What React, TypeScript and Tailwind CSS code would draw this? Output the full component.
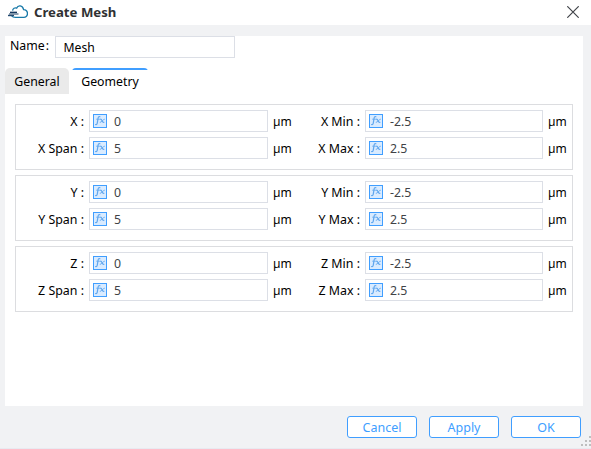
import React from "react";

const FxIcon = () => (
  <svg width="14" height="14" viewBox="0 0 14 14" className="shrink-0">
    <rect x="0.5" y="0.5" width="13" height="13" fill="#d9ebff" stroke="#409eff" />
    <g fill="none" stroke="#5fa6ee" strokeLinecap="round">
      <path d="M6.9 2.7C5.5 2.2 5.2 3.4 5 4.6L4.3 8.9c-.2 1.4-.8 2-1.7 1.6" strokeWidth="1.2" />
      <path d="M3.6 5.2h3" strokeWidth="0.8" />
      <path d="M7.5 5.2c1.6-.5 1.5 3.8 3.4 3.1" strokeWidth="1.2" />
      <path d="M11.4 5.1C9.9 4.9 8.9 8.7 7.2 8.4" strokeWidth="0.9" />
    </g>
  </svg>
);

const Field = ({ value, width }: { value: string; width: string }) => (
  <div className={`flex h-[22px] shrink-0 items-center border border-[#dcdfe6] bg-white pl-[3px] ${width}`}>
    <FxIcon />
    <span className="ml-[7px] pt-px text-[12.3px] leading-5 text-[#404246]">{value}</span>
  </div>
);

const Row = ({ labels, values }: { labels: [string, string]; values: [string, string] }) => (
  <div className="flex h-[22px] items-center whitespace-nowrap">
    <span className="w-[68px] pt-px text-right text-[12.4px]">{labels[0]} :</span>
    <div className="ml-[5px]">
      <Field value={values[0]} width="w-[179px]" />
    </div>
    <span className="ml-[5px] w-5 pt-px">µm</span>
    <span className="w-[67px] pt-px text-right text-[12.4px]">{labels[1]} :</span>
    <div className="ml-[5px]">
      <Field value={values[1]} width="w-[178px]" />
    </div>
    <span className="ml-[5px] pt-px">µm</span>
  </div>
);

const Group = ({ axis }: { axis: string }) => (
  <div className="flex h-[66px] flex-col gap-[5px] border border-[#dcdde0] pt-[5px]">
    <Row labels={[axis, `${axis} Min`]} values={["0", "-2.5"]} />
    <Row labels={[`${axis} Span`, `${axis} Max`]} values={["5", "2.5"]} />
  </div>
);

const DialogButton = ({ children }: { children: React.ReactNode }) => (
  <button className="flex h-[22px] w-[70px] items-center justify-center rounded-[3px] border border-[#409eff] bg-white pt-[2px] text-[12.5px] leading-5 text-[#409eff]">
    {children}
  </button>
);

export default function App() {
  return (
    <div className="relative flex h-[449px] w-[591px] flex-col overflow-hidden bg-[#f1f2f4] font-['Noto_Sans','Open_Sans',sans-serif] text-[12px] leading-5 text-black">
      <header className="flex h-[25px] shrink-0 items-center bg-white pl-2">
        <svg width="20" height="14" viewBox="0 0 20 14" className="mb-[2px] shrink-0" fill="none">
          <path
            d="M4.6 5.6C4.8 3.4 6.8 2.5 8.7 3.1 10-.1 14.6.1 15.6 4.6 20.7 4.9 20.7 12 15.8 12.4H7.5C5.6 12.4 4.3 11.7 3.5 10.6"
            stroke="#1879a8"
            strokeWidth="1.3"
          />
          <path d="M2 7.4h7" stroke="#17395f" strokeWidth="1.5" />
          <path d="M1 9h9.5" stroke="#7d92a6" strokeWidth="1.8" />
          <path d="M0 10.5h6" stroke="#244a70" strokeWidth="1.4" />
        </svg>
        <h1 className="mb-[2px] ml-[6px] text-[13.2px] font-bold text-[#303133]">Create Mesh</h1>
        <svg width="12" height="12" viewBox="0 0 12 12" className="mr-3 mb-[2px] ml-auto" stroke="#414449" strokeWidth="1.2">
          <path d="M.3.3l11.4 11.4M11.7.3.3 11.7" />
        </svg>
      </header>

      <main className="mt-[11px] ml-[5px] h-[370px] w-[578px] shrink-0 bg-white">
        <div className="flex h-[22px]">
          <span className="w-[50px] pl-[5px] text-[12.3px]">
            Name<span className="ml-px">:</span>
          </span>
          <div className="w-[180px] border border-[#dcdfe6] pl-[7.5px] text-[12.2px] leading-[22px]">Mesh</div>
        </div>
        <nav className="mt-[10px] flex h-[26px] gap-[3px] text-[12.3px] leading-[27px]">
          <div className="w-16 rounded-t-[5px] bg-[#eaeaea] text-center">General</div>
          <div className="relative w-19 overflow-hidden rounded-t-[4px] text-center">
            <div className="absolute inset-x-0 top-0 h-[2px] bg-[#409eff]" />
            Geometry
          </div>
        </nav>
        <div className="mx-[10px] mt-[10px] flex flex-col gap-[5px]">
          <Group axis="X" />
          <Group axis="Y" />
          <Group axis="Z" />
        </div>
      </main>

      <footer className="mt-[10px] flex justify-end gap-3 pr-[10px]">
        <DialogButton>Cancel</DialogButton>
        <DialogButton>Apply</DialogButton>
        <DialogButton>OK</DialogButton>
      </footer>
      <div className="mt-auto h-px bg-[#e8eaf0]" />
      <svg width="10" height="10" viewBox="0 0 10 10" className="absolute right-0 bottom-[3px]" fill="#bebebe">
        <path d="M8 0h2v2H8zM4 4h2v2H4zM8 4h2v2H8zM0 8h2v2H0zM4 8h2v2H4zM8 8h2v2H8z" />
      </svg>
    </div>
  );
}
